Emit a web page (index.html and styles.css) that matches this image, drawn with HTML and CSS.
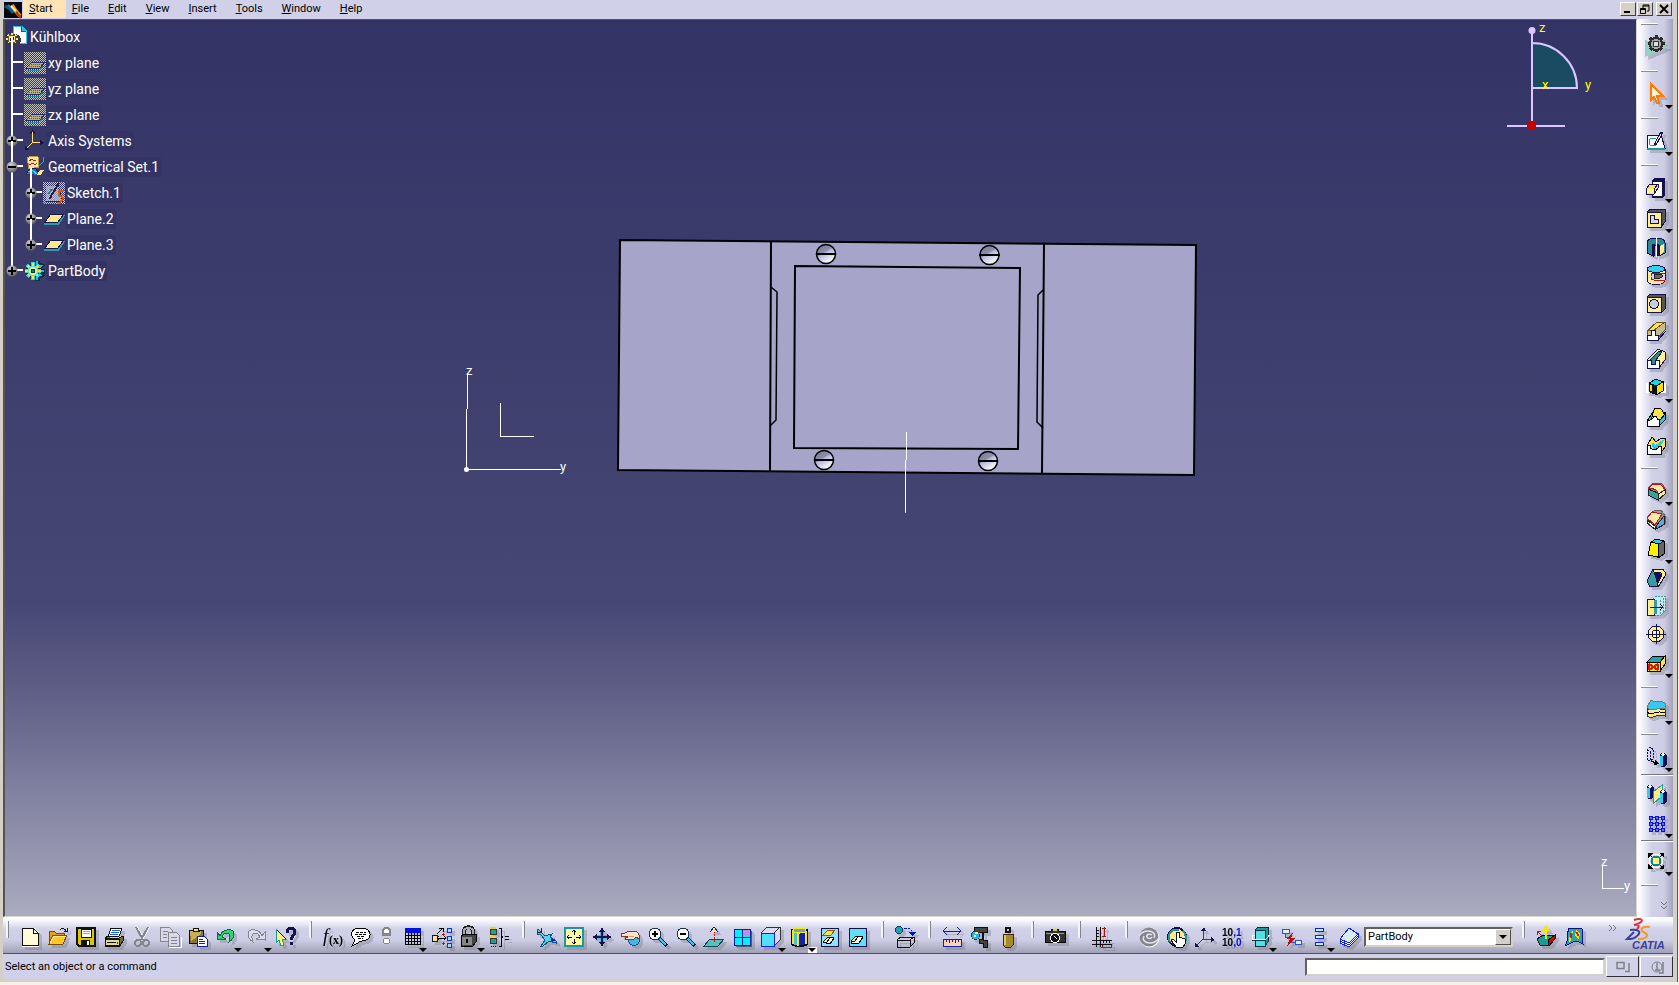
FILE: index.html
```html
<!DOCTYPE html>
<html lang="en">
<head>
<meta charset="utf-8">
<title>CATIA - Kühlbox</title>
<link rel="stylesheet" href="styles.css">
</head>
<body>
<div class="app">
  <header class="menubar">
    <svg class="menubar__logo" viewBox="0 0 18 16" aria-hidden="true"><rect width="18" height="16" fill="#05060c"/><path d="M1 4l5 3 3 4" stroke="#0d5a80" stroke-width="3" fill="none"/><path d="M4 3l5 4" stroke="#178ab8" stroke-width="2"/><path d="M8 3l3 5 5 6" stroke="#f08a20" stroke-width="4" fill="none"/><path d="M7 4l5 5" stroke="#ffe9a0" stroke-width="2"/><path d="M12 10l5 6" stroke="#a03c08" stroke-width="2"/></svg>
    <nav class="menu" aria-label="Main menu">
      <button class="menu__item menu__item--active"><u>S</u>tart</button>
      <button class="menu__item"><u>F</u>ile</button>
      <button class="menu__item"><u>E</u>dit</button>
      <button class="menu__item"><u>V</u>iew</button>
      <button class="menu__item"><u>I</u>nsert</button>
      <button class="menu__item"><u>T</u>ools</button>
      <button class="menu__item"><u>W</u>indow</button>
      <button class="menu__item"><u>H</u>elp</button>
    </nav>
    <div class="winctl">
      <button class="winctl__btn" aria-label="Minimize"><svg viewBox="0 0 12 10"><path d="M2 8h6" stroke="#000" stroke-width="2"/></svg></button>
      <button class="winctl__btn" aria-label="Restore"><svg viewBox="0 0 12 10"><path d="M4 1h6v6H8M4 1v3M4 2h6M1.500 4.500h5v5h-5zM1 5.500h6" stroke="#000" fill="none"/></svg></button>
      <button class="winctl__btn winctl__btn--close" aria-label="Close"><svg viewBox="0 0 12 10"><path d="M2 1l8 8M10 1L2 9" stroke="#000" stroke-width="2"/></svg></button>
    </div>
  </header>

  <main class="workspace">
    <section class="viewport" aria-label="3D view">
      <svg class="scene" viewBox="5 20 1631 896" role="img" aria-label="Part geometry">
        <defs>
          <linearGradient id="hole" x1="0" y1="0" x2=".6" y2="1"><stop offset="0" stop-color="#747390"/><stop offset=".48" stop-color="#8f8fae"/><stop offset=".52" stop-color="#b4b4dc"/><stop offset="1" stop-color="#fff"/></linearGradient>
        </defs>
        <g stroke="#000" stroke-width="2" fill="none">
          <path fill="#a6a5c9" d="M620 240L1196 245 1194 475 618 470z"/>
          <path d="M771 241L770 472M1044 244L1042 474"/>
          <path d="M795 266L1020 268 1018 449 794 448z"/>
          <path stroke-width="1.500" d="M771 287l6 5-1 128-6 6M1043 290l-5 5-1 127 6 6"/>
        </g>
        <g fill="url(#hole)" stroke="#000" stroke-width="1.500">
          <circle cx="826" cy="254" r="9.500"/><circle cx="989.500" cy="255" r="9.500"/><circle cx="824" cy="460" r="9.500"/><circle cx="988" cy="461" r="9.500"/>
          <path stroke-width="2" d="M816 254h20M979 255h21M814 460h20M978 461h20"/>
        </g>
        <g stroke="#fff" fill="none" shape-rendering="crispEdges">
          <path d="M906.500 432v28M905.500 460v53M467.500 373v36M466.500 409v60.500H561M500.500 403v33.500H534"/>
        </g>
        <circle cx="466.500" cy="469.500" r="2.500" fill="#fff"/>
        <g class="scene__label" fill="#fff"><text x="466" y="375">z</text><text x="560" y="471">y</text></g>
      </svg>

      <svg class="compass" viewBox="1500 20 100 115" role="img" aria-label="Compass">
        <path d="M1532 43a45 45 0 0 1 45 45h-45z" fill="#1b4b62"/>
        <path d="M1532 43a45 45 0 0 1 45 45h-45M1532 30v94M1507 126h58" fill="none" stroke="#dcc8ff" stroke-width="2"/>
        <circle cx="1532" cy="30.500" r="3.500" fill="#dcc8ff"/>
        <rect x="1527" y="121" width="9" height="9" fill="#c80000"/>
        <g class="scene__label" fill="#ff0"><text x="1539" y="32">z</text><text x="1542" y="89">x</text><text x="1585" y="89">y</text></g>
      </svg>

      <svg class="triad" viewBox="1596 850 38 42" role="img" aria-label="Axis orientation">
        <path d="M1602.500 866v22.500H1624" fill="none" stroke="#fff" shape-rendering="crispEdges"/>
        <g class="scene__label" fill="#fff"><text x="1601" y="866">z</text><text x="1624" y="890">y</text></g>
      </svg>

      <svg class="defs" aria-hidden="true">
        <defs>
          <pattern id="dither" width="2" height="2" patternUnits="userSpaceOnUse"><rect width="1" height="1" fill="#c4c4c4"/><rect x="1" y="1" width="1" height="1" fill="#c4c4c4"/></pattern>
          <radialGradient id="ball" cx=".4" cy=".3" r=".7"><stop offset="0" stop-color="#d4d4d4"/><stop offset="1" stop-color="#606060"/></radialGradient>
          <symbol id="i-hidden-plane" viewBox="0 0 22 22"><rect width="22" height="22" fill="url(#dither)"/><path d="M3 18h13l5-8" stroke="#2f8a9c" fill="none"/><path d="M2 16l6-6h13l-5 6z" fill="#b9ad79" stroke="#2c2a6c"/><path d="M5 14h11M7 12h11" stroke="#55516b" stroke-dasharray="1 1"/></symbol>
          <symbol id="i-plane" viewBox="0 0 22 22"><path d="M1 16h14l6-9" stroke="#2f9aa8" stroke-width="2" fill="none"/><path d="M1.500 14.500l6-8h13l-6 8z" fill="#ffe888" stroke="#1a1450"/></symbol>
          <symbol id="i-plus" viewBox="0 0 12 12"><circle cx="6" cy="6" r="5.500" fill="url(#ball)"/><path d="M2 6h8M6 2v8" stroke="#000" stroke-width="2"/></symbol>
          <symbol id="i-minus" viewBox="0 0 12 12"><circle cx="6" cy="6" r="5.500" fill="url(#ball)"/><path d="M2 6h8" stroke="#000" stroke-width="2"/></symbol>
        </defs>
      </svg>

      <div class="tree">
        <div class="tree__root">
          <svg class="tree__icon" viewBox="0 0 22 22"><path d="M7 0h9l4 4v13H7z" fill="#fff" stroke="#25c5d8"/><path d="M15 0v5h5" fill="#25c5d8" stroke="#067"/><circle cx="9" cy="14" r="6" fill="#3a3a44"/><g transform="translate(6 13)"><path d="M0-6V6M-6 0H6M-4-4L4 4M4-4L-4 4" stroke="#ffe37a" stroke-width="2"/><circle r="4" fill="#ffe37a" stroke="#6a5420"/><circle r="1.500" fill="#555" stroke="#222"/></g></svg>
          <span class="tree__label">Kühlbox</span>
        </div>
        <ul class="tree__list">
          <li class="tree__node"><div class="tree__row"><span class="tree__knob"></span><svg class="tree__icon"><use href="#i-hidden-plane"/></svg><span class="tree__label">xy plane</span></div></li>
          <li class="tree__node"><div class="tree__row"><span class="tree__knob"></span><svg class="tree__icon"><use href="#i-hidden-plane"/></svg><span class="tree__label">yz plane</span></div></li>
          <li class="tree__node"><div class="tree__row"><span class="tree__knob"></span><svg class="tree__icon"><use href="#i-hidden-plane"/></svg><span class="tree__label">zx plane</span></div></li>
          <li class="tree__node"><div class="tree__row"><button class="tree__knob" aria-label="Expand Axis Systems"><svg><use href="#i-plus"/></svg></button><svg class="tree__icon" viewBox="0 0 22 22"><path d="M8.500 2v10.500H18M8.500 12.500L2 19" fill="none" stroke="#ffe37a"/><path d="M6 4l2.500-4L11 4" fill="none" stroke="#14104c"/><path d="M16 10l4 2.500-4 3zM1 16v4h4z" fill="#14104c"/></svg><span class="tree__label">Axis Systems</span></div></li>
          <li class="tree__node"><div class="tree__row"><button class="tree__knob" aria-label="Collapse Geometrical Set.1"><svg><use href="#i-minus"/></svg></button><svg class="tree__icon" viewBox="0 0 22 22"><path d="M3 2l4-2 7 1 1 10-10 2-1-6z" fill="#ffe9a0" stroke="#c8923a"/><path d="M5 5l3-2 2 2 2-1M5 9l4-2 2 2 2-2" stroke="#c01818" fill="none"/><path d="M19 1v5l-4 4" stroke="#2fa0b8" fill="none"/><path d="M2 18l4-5 5-1 6 7" fill="#1e7ac0" stroke="#0c1c60"/><path d="M4 16l4-2 6 5" stroke="#40d0e0" fill="none"/><path d="M13 19l3-5h4l-3 5z" fill="#ffe888"/></svg><span class="tree__label">Geometrical Set.1</span></div>
            <ul class="tree__list tree__list--sub">
              <li class="tree__node"><div class="tree__row"><button class="tree__knob" aria-label="Expand Sketch.1"><svg><use href="#i-plus"/></svg></button><svg class="tree__icon" viewBox="0 0 22 22"><rect width="22" height="22" fill="url(#dither)"/><path d="M2 3h13l4 16H2z" fill="#8c8ca8" stroke="#26246a"/><path d="M2 3h13l4 16H2z" fill="url(#dither)"/><path d="M16 1L8 14l-1 3" stroke="#20204c" stroke-width="2" fill="none"/><path d="M5 12l4-5" stroke="#2a8090" stroke-width="2"/><path d="M21 9h-5v4l4 3-3 5h-3" fill="none" stroke="#d85a10" stroke-width="2"/></svg><span class="tree__label">Sketch.1</span></div></li>
              <li class="tree__node"><div class="tree__row"><button class="tree__knob" aria-label="Expand Plane.2"><svg><use href="#i-plus"/></svg></button><svg class="tree__icon"><use href="#i-plane"/></svg><span class="tree__label">Plane.2</span></div></li>
              <li class="tree__node"><div class="tree__row"><button class="tree__knob" aria-label="Expand Plane.3"><svg><use href="#i-plus"/></svg></button><svg class="tree__icon"><use href="#i-plane"/></svg><span class="tree__label">Plane.3</span></div></li>
            </ul>
          </li>
          <li class="tree__node"><div class="tree__row"><button class="tree__knob" aria-label="Expand PartBody"><svg><use href="#i-plus"/></svg></button><svg class="tree__icon" viewBox="0 0 22 22"><path d="M13 1v20M5 11h16M7 4l12 13M19 4L7 18" stroke="#07303c" stroke-width="5"/><path d="M13 1v19M6 11h14M8 3l9 13M18 5L7 18" stroke="#18c4d8" stroke-width="2"/><circle cx="9" cy="11" r="7" fill="#07303c"/><path d="M9 2v18M1 11h16M3 5l12 12M15 5L3 17" stroke="#20d8e8" stroke-width="4"/><path d="M9 3v16M1 11h16M4 6l10 10M14 6L4 16" stroke="#f4e44c" stroke-width="2"/><circle cx="9" cy="11" r="5" fill="#58e0d8"/><circle cx="9" cy="11" r="4" fill="#f0f080"/><circle cx="9" cy="11" r="2" fill="#0a7a90" stroke="#034"/></svg><span class="tree__label">PartBody</span></div></li>
        </ul>
      </div>
    </section>

    <aside class="sidebar" aria-label="Part design tools">
      <i class="hsep"></i>
      <button class="tool tool--bench" aria-label="Part Design workbench"><svg class="ic" viewBox="0 0 20 20"><path d="M-1 6v17l24-10z" fill="#96cfc4"/><path d="M10 1v17M2 9.500h17M4 4l12 12M16 4L4 16" stroke="#2c2c2c" stroke-width="3"/><circle cx="10" cy="10" r="6" fill="#a8a8a8" stroke="#2c2c2c" stroke-width="2"/><circle cx="10" cy="10" r="3" fill="#d4e4e4" stroke="#333"/></svg></button>
      <i class="hsep"></i>
      <button class="tool tool--dd" aria-label="Select"><svg class="ic" viewBox="0 0 20 20"><path d="M5 0v16l3-3 3 6h2l-2-7h6z" fill="#fff3e0" stroke="#ff7a00" stroke-width="2"/></svg></button>
      <i class="hsep"></i>
      <button class="tool tool--dd" aria-label="Sketcher"><svg class="ic" viewBox="0 0 20 20"><path d="M1 4h14l4 13H1z" fill="#fff" stroke="#15104e"/><path d="M1 18h18" stroke="#1a9a9a" stroke-width="2"/><circle cx="7" cy="11" r="4" fill="none" stroke="#1a9a9a"/><path d="M16 1L10 12l-1 2" fill="none" stroke="#15104e" stroke-width="3"/><path d="M15 3l-5 9" stroke="#d8e8f8"/></svg></button>
      <i class="hsep"></i>
      <button class="tool tool--dd" aria-label="Pad"><svg class="ic" viewBox="0 0 20 20"><path d="M6 2l3-2h10v17l-3 3H6z" fill="#15104e"/><path d="M6 3h10v15H6z" fill="#fff" stroke="#15104e"/><path d="M0 11l4-5h8v4l-4 6H0z" fill="#ffe24a" stroke="#15104e"/><path d="M1 11h7v4H1z" fill="#fff3a8"/><path d="M8 11v4M8 11l4-5" stroke="#15104e"/></svg></button>
      <button class="tool tool--dd" aria-label="Pocket"><svg class="ic" viewBox="0 0 20 20"><path d="M1 4l4-3h14v13l-4 5H1z" fill="#555" stroke="#15104e"/><path d="M1 4h14v15H1z" fill="#fff08c" stroke="#15104e"/><path d="M4.500 7.500h4v4h4v4h-8z" fill="#d8d8e8" stroke="#15104e"/></svg></button>
      <button class="tool" aria-label="Shaft"><svg class="ic" viewBox="0 0 20 20"><path d="M1 6c0-4 5-5 9-5s9 1 9 5v10l-6 3V8H7v11l-6-3z" fill="#2a8a96" stroke="#15104e"/><path d="M14 9l4-2v8l-4 3z" fill="#fff08c"/><path d="M6 7h3v12H6zM11 7h2v12h-2z" fill="#15104e"/><path d="M10 0v20" stroke="#fff"/></svg></button>
      <button class="tool" aria-label="Groove"><svg class="ic" viewBox="0 0 20 20"><path d="M1 4v11c0 6 18 6 18 0V4z" fill="#ffeaa0" stroke="#15104e"/><ellipse cx="10" cy="4" rx="9" ry="3.500" fill="#35d0f0" stroke="#15104e"/><path d="M19 8H8c-4 0-4 7 0 7h11" fill="#d8d8e8" stroke="#c01414"/><path d="M8 9h6c3 0 3 4 0 4H8z" fill="#666" stroke="#222"/></svg></button>
      <button class="tool" aria-label="Hole"><svg class="ic" viewBox="0 0 20 20"><path d="M1 4l3-3h15v15l-3 3" fill="#555" stroke="#15104e"/><path d="M1 4h14v15H1z" fill="#fff08c" stroke="#15104e"/><circle cx="8" cy="11" r="4.500" fill="#c8cce0" stroke="#15104e"/></svg></button>
      <button class="tool" aria-label="Rib"><svg class="ic" viewBox="0 0 20 20"><path d="M1 14l1-5 9-8h8v8l-8 9z" fill="#c9b98c" stroke="#555"/><path d="M3 9l8-8h8L8 9z" fill="#ffe24a" stroke="#6a5a10"/><path d="M1 14h4V9h4v5h3v5H1z" fill="#fff" stroke="#15104e"/><path d="M12 19l8-9" stroke="#15104e"/></svg></button>
      <button class="tool" aria-label="Slot"><svg class="ic" viewBox="0 0 20 20"><path d="M1 11L12 0l7 3v8l-6 8z" fill="#fff08c" stroke="#15104e"/><path d="M4 11l9-9 3 1-7 9v3H5z" fill="#2a8a96" stroke="#15104e"/><path d="M1 11h4v4h4v-4h4v8H1z" fill="#fff" stroke="#15104e"/></svg></button>
      <button class="tool tool--dd" aria-label="Solid combine"><svg class="ic" viewBox="0 0 20 20"><path d="M1 5v10M19 5v10M1 14h18" stroke="#fff" stroke-width="2"/><path d="M3 5l7-4 7 3-7 4z" fill="#00e0f0" stroke="#000"/><path d="M3 5l7 3v9l-7-3z" fill="#111"/><path d="M10 8l7-4v9l-7 4z" fill="#ffe000" stroke="#000"/><path d="M5 7v6" stroke="#ffe000" stroke-width="2"/></svg></button>
      <button class="tool" aria-label="Multi-sections solid"><svg class="ic" viewBox="0 0 20 20"><path d="M1 14l6-9h12v8l-6 6z" fill="#30c8e8" stroke="#000"/><path d="M4 13C7 13 6 2 10 1h4c3 1 2 6 5 6l-5 6c-3 0-3-4-5-4s-2 4-5 4z" fill="#ffe24a" stroke="#000"/><path d="M1 13h3c3 0 3-4 5-4s2 4 4 4v6H1z" fill="#fff" stroke="#000"/></svg></button>
      <button class="tool" aria-label="Removed multi-sections solid"><svg class="ic" viewBox="0 0 20 20"><path d="M1 11l5-9 4 5 5-4h4v9l-5 7H1z" fill="#ffe24a" stroke="#000"/><path d="M6 8c3 0 2 3 5 1s4-4 8-5l-6 9-6 3z" fill="#30c8e8"/><path d="M1 10h3c0 6 7 6 9 1h2v8H1z" fill="#fff" stroke="#000"/></svg></button>
      <i class="hsep"></i>
      <button class="tool tool--dd" aria-label="Edge fillet"><svg class="ic" viewBox="0 0 20 20"><path d="M2 7l5-5h6c4 0 6 4 6 8l-7 8L2 14z" fill="#888" stroke="#555"/><path d="M2 8l10 4v7L2 14z" fill="#3aa0a0" stroke="#222"/><path d="M7 3h6c3 1 5 3 6 7l-7 3c0-4-3-5-9-6z" fill="#ffe9a8" stroke="#c01414"/><path d="M12 13l7-4v4l-7 6z" fill="#ffe9a8" stroke="#222"/></svg></button>
      <button class="tool" aria-label="Chamfer"><svg class="ic" viewBox="0 0 20 20"><path d="M9 0h6l4 6v8l-10 5-8-6V7z" fill="#999" stroke="#666"/><path d="M1 10l8 6v3l-8-6z" fill="#fff" stroke="#222"/><path d="M6 2l10 2-7 11-8-7z" fill="#ffe9a8" stroke="#c01414"/><path d="M10 16l8-10 1 8-9 5z" fill="#60a8d8" stroke="#222"/></svg></button>
      <button class="tool tool--dd" aria-label="Draft angle"><svg class="ic" viewBox="0 0 20 20"><path d="M5 3l5-3 8 2v13l-6 4z" fill="#666" stroke="#000"/><path d="M5 3l5-3 8 2-5 3z" fill="#30c8e8" stroke="#000"/><path d="M5 3l8 2-1 13-10-2z" fill="#fff200" stroke="#000"/></svg></button>
      <button class="tool" aria-label="Shell"><svg class="ic" viewBox="0 0 20 20"><path d="M7 1h10l3 5-7 12-9 1-3-6z" fill="#3a9aa0" stroke="#15104e"/><path d="M7 1h10l3 5-7 12-2-1 5-10-1-2-7-1z" fill="#fff08c" stroke="#15104e"/><path d="M8 5h6l2 3-5 9-1-6z" fill="#15104e"/></svg></button>
      <button class="tool" aria-label="Thickness"><svg class="ic" viewBox="0 0 20 20"><path d="M7 3l3-3h9v15l-4 4H7z" fill="#c8e8ee" stroke="#3a9aa0" stroke-dasharray="2 1"/><path d="M1 3h7v16H1z" fill="#fff08c" stroke="#15104e"/><path d="M8 4h3v14H8z" fill="#3a9aa0"/><path d="M14 4v14M17 2v14" stroke="#3a9aa0" stroke-dasharray="2 1"/><path d="M4 11h13M14 8l3 3-3 3" fill="none" stroke="#15104e"/></svg></button>
      <button class="tool" aria-label="Thread/Tap"><svg class="ic" viewBox="0 0 20 20"><circle cx="10" cy="10" r="8" fill="#fff08c" stroke="#15104e"/><circle cx="10" cy="10" r="4" fill="#fffac8" stroke="#15104e"/><path d="M10 0v20M0 10h20" stroke="#15104e"/></svg></button>
      <button class="tool tool--dd" aria-label="Remove face"><svg class="ic" viewBox="0 0 20 20"><path d="M1 9l6-6h12l-5 6z" fill="#2aa0a8" stroke="#000"/><path d="M14 9l5-6v8l-5 7z" fill="#ffe24a" stroke="#000"/><path d="M1 9h13v9H1z" fill="#fff200" stroke="#000"/><path d="M3 11l9 6M12 11l-9 6M3 11v6M12 11v6" stroke="#e01010" stroke-width="2"/></svg></button>
      <i class="hsep"></i>
      <button class="tool tool--dd" aria-label="Thick surface"><svg class="ic" viewBox="0 0 20 20"><path d="M1 8c5 5 6-2 18 2v6c-10-4-12 5-18 0z" fill="#ffe888" stroke="#333"/><path d="M1 12c5 5 8-3 18 1" fill="none" stroke="#000"/><path d="M1 7l4-7c5 4 9-1 14 3v6c-8-3-12 5-18-2z" fill="#35c8f0" stroke="#777"/></svg></button>
      <i class="hsep"></i>
      <button class="tool tool--dd" aria-label="Translation"><svg class="ic" viewBox="0 0 20 20"><path d="M1 3l3-3 3 2v10l-3 2-3-2zM1 3l3 2 3-3M4 5v9" fill="none" stroke="#15104e" stroke-dasharray="2 1"/><path d="M5 14l5 2" stroke="#000"/><path d="M9 13l4 4-5 1z" fill="#000"/><path d="M14 8l3-2 3 2v10l-3 2-3-2z" fill="#15104e" stroke="#15104e"/><path d="M14 9h3v10h-3z" fill="#35c8f0"/><path d="M14 8l3-2 2 2-2 1z" fill="#fff"/></svg></button>
      <i class="hline"></i>
      <button class="tool" aria-label="Mirror"><svg class="ic" viewBox="0 0 20 20"><path d="M1 3l3-2 3 2v10l-3 2-3-2z" fill="#15104e" stroke="#15104e"/><path d="M1 4h3v10H1z" fill="#35c8f0"/><path d="M1 3l3-2 2 2-2 1z" fill="#fff"/><path d="M7 8l9-7v11l-9 8z" fill="#f4f08c" stroke="#2a9a8a"/><path d="M14 8l3-2 3 2v10l-3 2-3-2z" fill="#15104e" stroke="#15104e"/><path d="M14 9h3v10h-3z" fill="#35c8f0"/><path d="M14 8l3-2 2 2-2 1z" fill="#fff"/></svg></button>
      <button class="tool tool--dd" aria-label="Rectangular pattern"><svg class="ic" viewBox="0 0 20 20"><path d="M4.500 4.500h12v12h-12zM10.500 4v12M4 10.500h12" fill="none" stroke="#1020c0"/><path d="M3 3h3v3H3zM9 3h3v3H9zM15 3h3v3h-3zM3 9h3v3H3zM9 9h3v3H9zM15 9h3v3h-3zM3 15h3v3H3zM9 15h3v3H9zM15 15h3v3h-3z" fill="#6070f0" stroke="#0a10e0"/></svg></button>
      <i class="hline"></i>
      <button class="tool tool--dd" aria-label="Scaling"><svg class="ic" viewBox="0 0 20 20"><path d="M2 7V2h5zM13 2h5v5zM18 13v5h-5zM7 18H2v-5z" fill="#000"/><circle cx="10" cy="10" r="6.500" fill="#d0d0e8" stroke="#fff"/><path d="M3 3l14 14M17 3L3 17" stroke="#000"/><circle cx="10" cy="10" r="4.500" fill="#fff27a" stroke="#148088" stroke-width="2"/></svg></button>
      <i class="hsep"></i>
      <button class="more more--down" aria-label="More tools"><svg viewBox="0 0 8 8"><path d="M1 0l3 3 3-3M1 4l3 3 3-3" fill="none" stroke="#777"/></svg></button>
    </aside>
  </main>

  <div class="toolbar" role="toolbar" aria-label="Standard tools">
    <i class="vsep vsep--first"></i>
    <button class="tool" aria-label="New"><svg class="ic" viewBox="0 0 20 20"><path d="M2 1h12l4 4v14H2z" fill="#fffdd8" stroke="#fff"/><path d="M2.500 19V1.500h11M2 18.500h16V6" fill="none" stroke="#111"/><path d="M13 1v5h5z" fill="#fff" stroke="#111"/></svg></button>
    <button class="tool" aria-label="Open"><svg class="ic" viewBox="0 0 20 20"><path d="M1 17V4h5l2 2h8v4" fill="#e8a010" stroke="#7a4a00"/><path d="M1 17l4-9h14l-4 9z" fill="#ffc828" stroke="#7a4a00"/><path d="M2 16l4-7h12" stroke="#fff08c" fill="none"/><path d="M12 3c2-2 5-2 6 1M16 4h3V1" fill="none" stroke="#111"/></svg></button>
    <button class="tool" aria-label="Save"><svg class="ic" viewBox="0 0 20 20"><path d="M1 1h18v18H3l-2-2z" fill="#d8c800" stroke="#111" stroke-width="2"/><path d="M5 2h10v8H5z" fill="#fff" stroke="#111"/><path d="M7 4h7M7 6h7" stroke="#8aa"/><path d="M5 13h9v6H5z" fill="#111"/><path d="M11 14h2v4h-2z" fill="#fff"/></svg></button>
    <button class="tool" aria-label="Print"><svg class="ic" viewBox="0 0 20 20"><path d="M7 1h11l-3 9H4z" fill="#fff" stroke="#111"/><path d="M8 3h8M7 5h8M6 7h8" stroke="#2060e0"/><path d="M1 11l3-2h15v5l-3 5H1z" fill="#706c38" stroke="#111"/><path d="M1 11h14l4-2M1 12h14v6H1z" fill="#e0dc90" stroke="#111"/><path d="M3 15h9" stroke="#111"/><path d="M13 16h1" stroke="#c00" stroke-width="2"/></svg></button>
    <button class="tool tool--off" aria-label="Cut"><svg class="ic" viewBox="0 0 20 20"><path d="M5 0l7 13M17 0l-7 13" stroke="#fff" stroke-width="2"/><path d="M4 0l7 13M16 0L9 13" stroke="#85858c" stroke-width="2"/><circle cx="6" cy="16" r="3" fill="none" stroke="#85858c" stroke-width="2"/><circle cx="14" cy="16" r="3" fill="none" stroke="#85858c" stroke-width="2"/></svg></button>
    <button class="tool tool--off" aria-label="Copy"><svg class="ic" viewBox="0 0 20 20"><g fill="#d8d8ea" stroke="#85858c"><path d="M.500.500h9l3 3v11H.500z"/><path d="M8.500 5.500h8l3 3v11h-11z"/></g><path d="M3 4h5M3 7h4M3 10h4M11 10h6M11 13h6M11 16h6" stroke="#85858c" fill="none"/><path d="M9 20.500h12v-11" fill="none" stroke="#fff"/></svg></button>
    <button class="tool" aria-label="Paste"><svg class="ic" viewBox="0 0 20 20"><path d="M1 3h14v13H1z" fill="#8a7434" stroke="#111"/><path d="M2 4h11v3L3 14z" fill="#c8ae5a"/><path d="M5 4c0-4 6-4 6 0z" fill="#ffe24a" stroke="#111"/><path d="M9 9h7l3 3v7H9z" fill="#fff" stroke="#1020b0"/><path d="M11 12h4M11 14h6M11 16h6" stroke="#1020b0"/></svg></button>
    <button class="tool tool--dd" aria-label="Undo"><svg class="ic" viewBox="0 0 20 20"><path d="M4 9C6 2 18 0 18 7c0 3-2 6-5 8 2-5 1-9-2-9-2 0-4 2-5 4l4 2-9 1V5z" fill="#2fd47a" stroke="#0a6a3a"/></svg></button>
    <button class="tool tool--dd tool--off" aria-label="Redo"><svg class="ic" viewBox="0 0 20 20"><path d="M16 9C14 2 2 0 2 7c0 3 2 6 5 8-2-5-1-9 2-9 2 0 4 2 5 4l-4 2 9 1V5z" fill="#dcdcec" stroke="#85858c"/></svg></button>
    <button class="tool" aria-label="What's this?"><svg class="ic" viewBox="0 0 20 20"><path d="M0 2v14l3-3 2 6 3-1-2-6h4z" fill="#fff27a" stroke="#1a9a9a"/><path d="M1 3l9 9" stroke="#15104e"/><path d="M11 6c0-6 8-6 8-1 0 3-4 4-4 8" fill="none" stroke="#15104e" stroke-width="3"/><path d="M14 15h3v3h-3z" fill="#15104e"/></svg></button>
    <i class="vsep"></i>
    <button class="tool" aria-label="Formula"><svg class="ic" viewBox="0 0 20 20"><text class="glyph-f" x="0" y="15">f</text><text class="glyph-x" x="6" y="17">(x)</text></svg></button>
    <button class="tool" aria-label="Comment"><svg class="ic" viewBox="0 0 20 20"><path d="M10 1c12 0 12 13 1 13-2 0-3 0-4 2l-6 3 3-6C-3 7 1 1 10 1z" fill="#fff" stroke="#000"/><path d="M5 5h10M4 7h12M6 9h8M7 11h5" stroke="#000" stroke-dasharray="3 1"/></svg></button>
    <button class="tool tool--narrow tool--off" aria-label="Check analysis"><svg class="ic" viewBox="0 0 20 20"><path d="M6 8V4c0-4 7-4 7 0v4z" fill="#fff" stroke="#85858c" stroke-width="2"/><path d="M7 6h5" stroke="#85858c"/><circle cx="9.500" cy="14" r="3" fill="#fff" stroke="#85858c"/></svg></button>
    <button class="tool tool--dd-tight" aria-label="Design table"><svg class="ic" viewBox="0 0 20 20"><path d="M2 1h16v5H2z" fill="#0010e0"/><path d="M2.500 6v11.500h15V6M2 8.500h16M2 11.500h16M2 14.500h16M5.500 6v12M8.500 6v12M11.500 6v12M14.500 6v12" fill="none" stroke="#000"/></svg></button>
    <button class="tool" aria-label="Relations"><svg class="ic" viewBox="0 0 20 20"><path d="M1 8h5v6H1z" fill="#ffe888" stroke="#15104e"/><path d="M6 7l5-5M8 1h4v4M7 11h8M8 9l-2 2 2 2M13 9l2 2-2 2" fill="none" stroke="#000"/><path d="M16 1h4v4h-4zM16 9h4v4h-4zM16 16h4v4h-4z" fill="#a8d8f8" stroke="#1030d8"/><path d="M12 6v3M11 7h3M12 15v3M11 16h3" stroke="#c01414"/></svg></button>
    <button class="tool tool--dd" aria-label="Lock parameters"><svg class="ic" viewBox="0 0 20 20"><path d="M5 9V4c0-5 9-5 9 0v5" fill="none" stroke="#222" stroke-width="4"/><path d="M5 9V4c0-4 9-4 9 0v5" fill="none" stroke="#aaa" stroke-width="2"/><path d="M2 9l3-2h12v8l-3 4H2z" fill="#444" stroke="#000"/><path d="M3 10h10v8H3z" fill="#888"/><path d="M8 12v4" stroke="#000" stroke-width="2"/></svg></button>
    <button class="tool" aria-label="Equivalent dimensions"><svg class="ic" viewBox="0 0 20 20"><path d="M1 2h6v5H1zM1 11h6v5H1z" fill="#20a0a0" stroke="#333"/><path d="M1 1h6M1 10h6" stroke="#e8d820" stroke-width="2"/><path d="M2 19h5" stroke="#000" stroke-dasharray="1 1"/><path d="M10 1h2v8l2 1-2 1v8h-2" fill="none" stroke="#000"/><path d="M16 9h4M16 12h4" stroke="#000"/></svg></button>
    <i class="vsep"></i>
    <button class="tool" aria-label="Fly mode"><svg class="ic" viewBox="0 0 20 20"><path d="M2 2l3 3 4 4 7-2-2 3 6 4v2l-7-2-6 5H5l4-6-4-5-4-1z" fill="#58d0f0" stroke="#0a5a80"/><path d="M1 5h5M5 1v5" stroke="#222"/><path d="M15 13h4" stroke="#0020d0" stroke-width="2"/></svg></button>
    <button class="tool" aria-label="Fit all in"><svg class="ic" viewBox="0 0 20 20"><path d="M1 1h18v18H1z" fill="#fff9a8" stroke="#1a9a9a" stroke-width="2"/><path d="M10 3v5M10 12v5M3 10h5M12 10h5M8 5l2-2 2 2M8 15l2 2 2-2M5 8l-2 2 2 2M15 8l2 2-2 2" fill="none" stroke="#000"/></svg></button>
    <button class="tool" aria-label="Pan"><svg class="ic" viewBox="0 0 20 20"><path d="M10 3v14M3 10h14" stroke="#35c0e0" stroke-width="4"/><path d="M10 1v18M1 10h18" stroke="#15104e" stroke-width="2"/><path d="M7 5l3-4 3 4zM7 15l3 4 3-4zM5 7l-4 3 4 3zM15 7l4 3-4 3z" fill="#15104e"/></svg></button>
    <button class="tool" aria-label="Rotate"><svg class="ic" viewBox="0 0 20 20"><circle cx="14" cy="13" r="5.500" fill="#40b8e8" stroke="#1050a0"/><path d="M1 6h4l4-2h6c4 1 5 5 4 8l-3-2-2 2-9 1v-2l3-1-3-1H1z" fill="#ffe0c8" stroke="#7a3a20"/><path d="M9 9h5" stroke="#d09a80"/></svg></button>
    <button class="tool" aria-label="Zoom in"><svg class="ic" viewBox="0 0 20 20"><path d="M11 11l8 8" stroke="#15104e" stroke-width="4"/><path d="M11 11l7 7" stroke="#40c0f0" stroke-width="2"/><circle cx="7" cy="7" r="6" fill="#fff" stroke="#1a3060"/><path d="M7 4v6M4 7h6" stroke="#000" stroke-width="2"/></svg></button>
    <button class="tool" aria-label="Zoom out"><svg class="ic" viewBox="0 0 20 20"><path d="M11 11l8 8" stroke="#15104e" stroke-width="4"/><path d="M11 11l7 7" stroke="#40c0f0" stroke-width="2"/><circle cx="7" cy="7" r="6" fill="#fff" stroke="#1a3060"/><path d="M4 7h6" stroke="#000" stroke-width="2"/></svg></button>
    <button class="tool" aria-label="Normal view"><svg class="ic" viewBox="0 0 20 20"><path d="M0 19l6-7h14l-6 7z" fill="#58c0b8" stroke="#0a4a60"/><path d="M10 4v11" stroke="#d01414" stroke-dasharray="2 1"/><path d="M6 5l4-5 4 5" fill="#fff27a" stroke="#0010d0"/></svg></button>
    <button class="tool" aria-label="Multi view"><svg class="ic" viewBox="0 0 20 20"><path d="M4 4h16v16H4z" fill="#555570"/><path d="M2 2h16v16H2z" fill="#00f0ff" stroke="#0a20a0"/><path d="M11 3h6v6h-6z" fill="#c090e0"/><path d="M10 2v16M2 10h16" stroke="#0a20a0"/></svg></button>
    <button class="tool tool--dd" aria-label="Isometric view"><svg class="ic" viewBox="0 0 20 20"><path d="M1 6l6-6h13v13l-6 6" fill="#dcdcee" stroke="#333"/><path d="M1 6h13v13H1z" fill="#50e0ff" stroke="#1020f0"/><path d="M14 6l6-6" stroke="#333"/></svg></button>
    <button class="tool tool--dd tool--ddbox" aria-label="Shading with edges"><svg class="ic" viewBox="0 0 20 20"><path d="M2 3v13c0 4 15 4 15 0V3z" fill="#1020b0" stroke="#000" stroke-width="2"/><path d="M5 5v13" stroke="#40c0f0" stroke-width="3"/><path d="M3 4v13M8 6v13M16 4v13" stroke="#ffe800" stroke-width="2"/><ellipse cx="9.500" cy="3.500" rx="6.500" ry="2.500" fill="#60a8d8" stroke="#ffe800"/></svg></button>
    <button class="tool" aria-label="Hide/Show"><svg class="ic" viewBox="0 0 20 20"><path d="M1 1h17v18H1z" fill="#90e0f8" stroke="#15104e"/><path d="M3 8l5-5h7l-4 5z" fill="#ffe24a" stroke="#8a5a10"/><path d="M3 15l5-5 6 1-4 6z" fill="#fff" stroke="#000"/><path d="M3 15l5-5 2 1-4 5z" fill="#fff08c" stroke="#000"/></svg></button>
    <button class="tool" aria-label="Swap visible space"><svg class="ic" viewBox="0 0 20 20"><path d="M1 1h17v18H1z" fill="#60e0f8" stroke="#15104e"/><path d="M3 14l5-5 7 1-4 6-7 1z" fill="#fff" stroke="#000"/><path d="M3 14l5-5 2 1-4 5z" fill="#fff08c" stroke="#000"/></svg></button>
    <i class="vsep"></i>
    <button class="tool" aria-label="Apply material"><svg class="ic" viewBox="0 0 20 20"><path d="M2 13l4-3h13v6l-4 4H2zM2 13h13v7M15 13l4-3" fill="none" stroke="#111"/><circle cx="4" cy="3" r="3.500" fill="#20a0b8" stroke="#0a4060"/><path d="M9 1h5l3 3" fill="none" stroke="#0010d0" stroke-dasharray="3 1"/><path d="M14 5h7l-4 4z" fill="#0010d0"/></svg></button>
    <i class="vsep"></i>
    <button class="tool" aria-label="Measure between"><svg class="ic" viewBox="0 0 20 20"><path d="M1 4h18M5 0L1 4l4 4M15 0l4 4-4 4" fill="none" stroke="#1020b0"/><path d="M1 12h18v7H1z" fill="#ffd0b0" stroke="#1020b0"/><path d="M4 12v3M7 12v4M10 12v3M13 12v4M16 12v3" stroke="#1020b0"/></svg></button>
    <button class="tool" aria-label="Measure item"><svg class="ic" viewBox="0 0 20 20"><path d="M4 0h13v5h-4v8h4v7h-4v-4H9v-4h3V5H4z" fill="#444" stroke="#111"/><circle cx="5.500" cy="8.500" r="4" fill="#30b0d8" stroke="#0a4060"/><path d="M5 6h3M4 9h2" stroke="#fff27a" stroke-width="2"/></svg></button>
    <button class="tool" aria-label="Measure inertia"><svg class="ic" viewBox="0 0 20 20"><circle cx="10" cy="3" r="2.500" fill="none" stroke="#111" stroke-width="2"/><path d="M5 7h10v11l-2 2H7l-2-2z" fill="#a8892c" stroke="#3a2c00"/><path d="M7 8v10" stroke="#e0c860" stroke-width="2"/></svg></button>
    <i class="vsep"></i>
    <button class="tool" aria-label="Capture"><svg class="ic" viewBox="0 0 20 20"><path d="M0 4h6l1-2h6l1 2h6v11H0z" fill="#333" stroke="#000"/><path d="M1 6h18" stroke="#999"/><path d="M8 3h4" stroke="#e8d020" stroke-width="2"/><circle cx="10" cy="11" r="4.500" fill="#111" stroke="#fff"/><path d="M9 9l3 3" stroke="#fff"/></svg></button>
    <i class="vsep"></i>
    <button class="tool" aria-label="Mean dimensions"><svg class="ic" viewBox="0 0 20 20"><path d="M4 0v20M8 0v20M0 13h20M0 17h20M4 3h3M4 6h3M4 9h3M11 13v3M14 13v3M17 13v3" fill="none" stroke="#111"/><path d="M12 0v10M10 1h4M10 9h4M9 20h11M10 18v3M19 18v3" stroke="#b01010"/></svg></button>
    <i class="vsep"></i>
    <button class="tool tool--off" aria-label="Update all"><svg class="ic ic--smooth" viewBox="0 0 20 20"><circle cx="10.500" cy="10.500" r="10" fill="#fff"/><circle cx="10" cy="10" r="9.500" fill="#85858c"/><path d="M20 11c-2 3-5 5-9 5-5 0-8-3-6-7M0 9c2-3 5-5 9-5 5 0 8 3 6 7" fill="none" stroke="#e4e4f0" stroke-width="1.500"/><path d="M13 8c-3-2-6 0-5 2s4 2 5 0" fill="none" stroke="#e4e4f0" stroke-width="1.500"/></svg></button>
    <button class="tool" aria-label="Manual update"><svg class="ic" viewBox="0 0 20 20"><circle cx="10" cy="10" r="9" fill="#ffe888" stroke="#15104e" stroke-width="2"/><path d="M3 15C-1 8 5 1 12 3M16 4c4 4 3 9 2 12" fill="none" stroke="#1a9a9a" stroke-width="2"/><path d="M9 20l-5-7 2-1 3 3V5h3v5l6 2v5l-2 3z" fill="#fff" stroke="#111"/></svg></button>
    <button class="tool" aria-label="Axis system"><svg class="ic" viewBox="0 0 20 20"><path d="M8.500 2v10.500H18M8 12l-6 6" fill="none" stroke="#4a4030"/><path d="M6 4l3-4 2 4zM16 10l4 3-4 2zM0 16v4h4z" fill="#15104e"/></svg></button>
    <button class="tool" aria-label="Default precision"><svg class="ic" viewBox="0 0 20 20"><g class="glyph-num"><text x="-1" y="9">10<tspan fill="#0010e0">,1</tspan></text><text x="-1" y="19">10<tspan fill="#0010e0">,0</tspan></text></g></svg></button>
    <button class="tool tool--dd" aria-label="Section"><svg class="ic" viewBox="0 0 20 20"><path d="M4 3l3-3h10v15l-3 4H4z" fill="#1a9a9a" stroke="#07303c"/><path d="M4 3h10v16H4z" fill="#50e0e8" stroke="#07303c"/><path d="M4 8H1v4h14l4-4h-2" fill="none" stroke="#fff"/><path d="M1 13h14" stroke="#07303c"/></svg></button>
    <button class="tool" aria-label="Parent children"><svg class="ic" viewBox="0 0 20 20"><path d="M1 2h7v4H1zM14 13h6v4h-6z" fill="#e0f0ff" stroke="#3050d0"/><path d="M4 6v4h5M10 15h4" stroke="#3050d0" fill="none"/><path d="M12 6L5 12h4l-3 7 8-8h-4z" fill="#b01010"/></svg></button>
    <button class="tool tool--dd" aria-label="Tree order"><svg class="ic" viewBox="0 0 20 20"><path d="M6 1h8v3H6zM6 8h8v3H6zM6 15h8v3H6z" fill="#c8f0f0" stroke="#1020e0"/></svg></button>
    <button class="tool" aria-label="Catalog browser"><svg class="ic" viewBox="0 0 20 20"><path d="M1 12v4l9 4 9-9V7l-9 9z" fill="#fff" stroke="#1020e0"/><path d="M1 14l9 4 9-9" fill="none" stroke="#1020e0"/><path d="M1 12L10 1l9 6-9 9z" fill="#d8ecfa" stroke="#1020e0"/></svg></button>
    <div class="combo">
      <select class="combo__select" aria-label="In work object"><option>PartBody</option></select>
      <span class="combo__arrow"></span>
    </div>
    <i class="vsep"></i>
    <button class="tool" aria-label="Draft analysis"><svg class="ic" viewBox="0 0 20 20"><path d="M1 12l6-4h12l-6 10H4z" fill="#1a9a9a" stroke="#111"/><path d="M12 13l7-5v4l-6 7z" fill="#b01010" stroke="#111"/><path d="M10 12V1M7 4l3-4 3 4" stroke="#f8e800" stroke-width="2" fill="none"/><path d="M6 9L2 5M1 8V4h4" stroke="#c01414" fill="none"/></svg></button>
    <button class="tool" aria-label="Curvature analysis"><svg class="ic" viewBox="0 0 20 20"><path d="M5 1l13 1 1 15-6-3-4 1-8 4c4-5 1-11 4-18z" fill="#20a8b8" stroke="#0a1080"/><path d="M6 6l3-2-2 9-2 2zM12 3l4 3-1 6-4-3z" fill="#ffe000"/><path d="M7 6v5M13 5l1 4" stroke="#e01010" stroke-width="2"/></svg></button>
    <button class="more more--right" aria-label="More toolbars"><svg viewBox="0 0 8 8"><path d="M0 1l3 3-3 3M4 1l3 3-3 3" fill="none" stroke="#777"/></svg></button>
    <svg class="brand" viewBox="0 0 42 32" role="img" aria-label="DS CATIA"><path d="M9 2c5-2 10-1 7 2-2 2-5 2-7 3 5-1 6 1 3 4" fill="none" stroke="#e0303a" stroke-width="2"/><path d="M5 12c9-1 11 2 8 5-3 4-7 4-11 4l7-7" fill="none" stroke="#3c3f9c" stroke-width="2"/><path d="M25 9c-6-1-10 1-8 4 1 2 6 2 5 5-1 3-5 3-9 3" fill="none" stroke="#f59a20" stroke-width="2"/><text x="7" y="31">CATIA</text></svg>
  </div>

  <footer class="status">
    <span class="status__text">Select an object or a command</span>
    <input class="status__input" type="text" aria-label="Power input">
    <button class="status__btn" aria-label="Dialog"><svg viewBox="0 0 16 12"><path d="M2 1.500h7v6H2zM10 10.500h4V2" fill="none" stroke="#808088" stroke-width="1.500"/></svg></button>
    <button class="status__btn" aria-label="Information"><svg viewBox="0 0 16 12"><circle cx="8" cy="6" r="5" fill="none" stroke="#808088"/><path d="M8 2v2M7 5h1v4M6 9h5M14 1v11h-4" fill="none" stroke="#808088" stroke-width="1.500"/></svg></button>
  </footer>
</div>
</body>
</html>
```

FILE: styles.css
```css
:root {
  --face: #d0d0e8;
  --bevel: #d4d0c8;
  --edge: #55554f;
}

* { box-sizing: border-box; }

body {
  margin: 0;
  background: #f4f2ea;
  font: 11px/14px Roboto, Tahoma, sans-serif;
  color: #000;
}

button {
  font: inherit;
  color: inherit;
  border: 0;
  padding: 0;
  background: none;
}

svg { display: block; overflow: visible; }

.app {
  display: flex;
  flex-direction: column;
  height: calc(100vh - 3px);
  margin-right: 2px;
  background: var(--face);
  border: solid var(--bevel);
  border-width: 0 4px 3px 3px;
  box-shadow: 0 1px 0 #44443f, 1px 0 0 #55554f;
}

/* Menu bar */
.menubar {
  display: flex;
  flex: none;
  height: 19px;
  padding-left: 1px;
}
.menubar__logo { width: 18px; height: 16px; margin-top: 2px; }
.menu { display: flex; margin-left: 1px; }
.menu__item { padding: 0 13px 0 6px; height: 18px; }
.menu__item--active { background: #ffe4b8; }
.winctl { display: flex; margin: 2px 1px 0 auto; gap: 1px; }
.winctl__btn {
  display: grid;
  place-items: center;
  width: 16px;
  height: 14px;
  background: var(--bevel);
  border: 1px solid;
  border-color: #fff #404040 #404040 #fff;
}
.winctl__btn--close { margin-left: 2px; }
.winctl__btn svg { width: 12px; height: 10px; }

/* Workspace */
.workspace { display: flex; flex: 1; min-height: 0; }
.viewport {
  position: relative;
  flex: 1;
  min-width: 0;
  overflow: hidden;
  border: solid;
  border-width: 1px 1px 1px 2px;
  border-color: var(--edge) #d8d5cc #d8d5cc var(--edge);
  background: linear-gradient(#333366 0%, #3c3c6c 30%, #474775 65%, #5c5c85 74%, #aaaac0 100%);
}
.scene { position: absolute; inset: 0; width: 100%; height: 100%; }
.scene__label { font: 13px Roboto, sans-serif; }
.compass { position: absolute; top: 0; right: 36px; width: 100px; height: 115px; }
.triad { position: absolute; right: 2px; bottom: 24px; width: 38px; height: 42px; }
.defs { position: absolute; width: 0; height: 0; }

/* Specification tree */
.tree {
  position: relative;
  width: max-content;
  padding: 4px 0 0 1px;
  color: #fff;
  font-size: 14px;
  line-height: 20px;
}
.tree__root, .tree__row { display: flex; align-items: center; height: 26px; }
.tree__list { margin: 0; padding: 0; list-style: none; }
.tree__list--sub { padding-left: 19px; }
.tree__node { position: relative; }
.tree__node::before {
  content: "";
  position: absolute;
  left: 5px;
  top: -13px;
  width: 2px;
  height: calc(100% + 1px);
  background: #fff;
}
.tree__node:last-child::before { height: 26px; }
.tree__knob {
  position: relative;
  flex: none;
  width: 18px;
  height: 12px;
}
.tree__knob::before {
  content: "";
  position: absolute;
  left: 6px;
  top: 4px;
  width: 11px;
  height: 2px;
  background: #fff;
}
.tree__knob svg { position: relative; width: 12px; height: 12px; margin-top: -1px; }
.tree__icon { flex: none; width: 22px; height: 22px; shape-rendering: crispEdges; }
.tree__label {
  padding: 0 2px;
  border-radius: 3px;
  background: #343464;
}

/* Tools shared by both bars */
.tool {
  position: relative;
  flex: none;
  width: 28px;
  height: 28px;
  padding: 4px;
}
.ic {
  width: 20px;
  height: 20px;
  shape-rendering: crispEdges;
  filter: drop-shadow(3px 3px 0 rgba(110, 110, 120, .3));
}
.ic--smooth { shape-rendering: auto; }
.tool--off .ic { filter: none; }
.tool--dd::after, .tool--dd-tight::after {
  content: "";
  position: absolute;
  right: 0;
  bottom: 0;
  border: solid transparent;
  border-width: 4px 4px 0;
  border-top-color: #000;
}
.toolbar .tool--dd { width: 30px; }
.toolbar .tool--dd::after, .toolbar .tool--dd-tight::after { bottom: -1px; }
.toolbar .tool--ddbox::before {
  content: "";
  position: absolute;
  right: -1px;
  bottom: -2px;
  width: 9px;
  height: 6px;
  background: #fff;
}
.tool--narrow { width: 24px; padding: 4px 2px; }

/* Right tool column */
.sidebar {
  display: flex;
  flex: none;
  flex-direction: column;
  width: 36px;
  padding-left: 4px;
  overflow: hidden;
  background: linear-gradient(90deg, #fff 0, #f4f4fb 5px, #d0d0e8 15px, #cdcde5 27px, #a2a2bb 100%);
}
.sidebar .tool { margin-left: 1px; }
.sidebar .tool--dd { width: 31px; height: 30px; padding-top: 3px; }
.sidebar .tool--bench { height: 33px; padding-top: 1px; }
.hsep {
  flex: none;
  width: 17px;
  height: 2px;
  margin: 8px 0 7px;
  background: #fff;
  border-bottom: 1px solid #8c8c90;
}
.hsep:first-child { margin-top: 4px; margin-bottom: 4px; }
.hline {
  flex: none;
  height: 2px;
  margin: 2px 0 4px;
  background: #fff;
  border-top: 1px solid #77777c;
}
.more { display: grid; place-items: center; width: 12px; height: 12px; }
.more svg { width: 8px; height: 8px; }
.more--down { margin: 7px 0 0 17px; }

/* Bottom tool bar */
.toolbar {
  display: flex;
  flex: none;
  align-items: flex-start;
  height: 37px;
  padding-top: 6px;
  border-bottom: 1px solid var(--edge);
  background: linear-gradient(#fff 0, #f6f6fc 4px, #d0d0e8 12px, #cdcde5 23px, #a0a0b6 100%);
}
.vsep {
  flex: none;
  width: 3px;
  height: 17px;
  margin: -2px 7px 0 9px;
  background: #f4f4fa;
  border-right: 1px solid #85858c;
}
.vsep--first { margin-left: 3px; }
.glyph-f { font: italic 19px "Liberation Serif", serif; }
.glyph-x { font: bold 12px "Liberation Serif", serif; }
.glyph-num { font: bold 10px "Liberation Sans", sans-serif; }
.combo { position: relative; width: 149px; height: 20px; margin: 4px 0 0 1px; }
.combo__select {
  width: 100%;
  height: 100%;
  padding: 0 20px 0 2px;
  appearance: none;
  font: inherit;
  color: #000;
  background: #fff;
  border: 2px solid;
  border-color: #606060 #d4d0c8 #d4d0c8 #606060;
  border-radius: 0;
}
.combo__arrow {
  position: absolute;
  top: 2px;
  right: 2px;
  display: grid;
  place-items: center;
  width: 16px;
  height: 16px;
  background: var(--bevel);
  border: 1px solid;
  border-color: #fff #505050 #505050 #fff;
  pointer-events: none;
}
.combo__arrow::after {
  content: "";
  border: solid transparent;
  border-width: 4px 4px 0;
  border-top-color: #000;
}
.more--right { margin: -1px 0 0 auto; }
.brand { flex: none; width: 42px; height: 32px; margin: -5px 6px 0 6px; }
.brand text { font: italic bold 11px "Liberation Sans", sans-serif; fill: #3c3f9c; }

/* Status bar */
.status {
  display: flex;
  flex: none;
  align-items: center;
  gap: 1px;
  height: 25px;
  padding-left: 2px;
}
.status__text { flex: 1; }
.status__input {
  width: 300px;
  height: 18px;
  padding: 0 2px;
  font: inherit;
  background: #fff;
  border: 2px solid;
  border-color: #606060 #d4d0c8 #d4d0c8 #606060;
}
.status__btn {
  display: grid;
  place-items: center;
  width: 33px;
  height: 21px;
  border: 1px solid;
  border-color: #fff #303030 #303030 #fff;
}
.status__btn svg { width: 16px; height: 12px; }
```
